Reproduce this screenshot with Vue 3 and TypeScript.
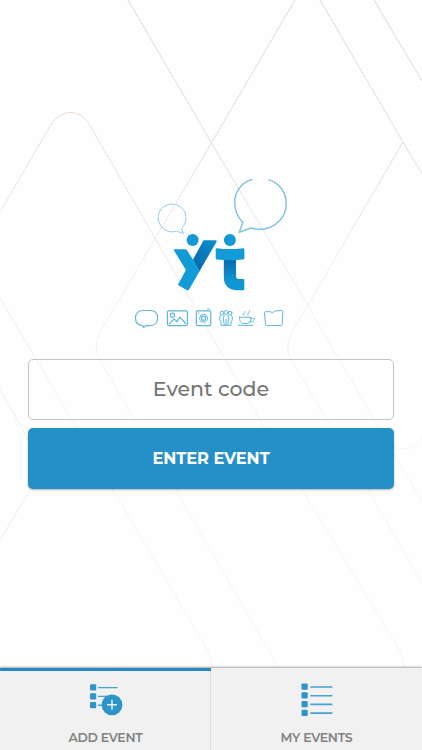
<script setup lang="ts">
import { ref } from 'vue'

type TabId = 'add' | 'mine'
const tabs: { id: TabId; label: string }[] = [
  { id: 'add', label: 'ADD EVENT' },
  { id: 'mine', label: 'MY EVENTS' },
]
const active = ref<TabId>('add')
const code = ref('')
</script>

<template>
  <div class="screen">
    <svg class="backdrop" viewBox="0 0 422 750" aria-hidden="true">
      <defs>
        <linearGradient id="fade" gradientUnits="userSpaceOnUse" x1="0" y1="0" x2="0" y2="450">
          <stop offset="0" stop-color="#dbd9dc" />
          <stop offset=".35" stop-color="#e0dee1" />
          <stop offset=".6" stop-color="#f0eff1" />
          <stop offset="1" stop-color="#f5f4f5" />
        </linearGradient>
        <linearGradient id="warm" gradientUnits="userSpaceOnUse" x1="0" y1="110" x2="0" y2="450">
          <stop offset="0" stop-color="#eadcd4" />
          <stop offset=".5" stop-color="#f1ebe9" />
          <stop offset="1" stop-color="#f5f4f5" />
        </linearGradient>
      </defs>
      <g fill="none" stroke="url(#fade)">
        <path d="M128 0L211 142L308 306L422 502" />
        <path d="M295 0L212 142L99 334Q94 345 98 357L139 427L279 668" />
        <path d="M320 0L403 142L422 174M374 0L422 81" />
        <path d="M403 142L291 334Q285 346 290 358L330 425L422 583" />
        <path d="M387 444Q395 449 405 449Q416 448 422 438" />
      </g>
      <g fill="none" stroke="url(#warm)">
        <path d="M0 212L52 123Q60 112 71 112.500Q82 113 89 124L263 425L400 651Q405 659 404 668" />
        <path d="M0 298L76 427L208 651Q213 659 212 668" />
        <path stroke="#f3ece8" d="M0 390L26 435Q37 460 30 490L0 540" />
      </g>
    </svg>

    <main class="content">
      <svg class="logo" width="154" height="154" viewBox="134 176 154 154" role="img" aria-label="yt">
        <defs>
          <linearGradient id="arm" x1="1" y1="0" x2="0.300" y2="1">
            <stop offset="0" stop-color="#0d91ce" /><stop offset="1" stop-color="#0569ac" />
          </linearGradient>
          <linearGradient id="stem" x1="0" y1="0" x2="0" y2="1">
            <stop offset="0" stop-color="#0568ae" /><stop offset=".75" stop-color="#1097d1" />
          </linearGradient>
        </defs>
        <g fill="none" stroke="#83c4e1" stroke-linejoin="round">
          <path stroke-width="1" stroke="#91cde4" d="M181.500 228.500Q187.500 222.500 185.300 213C182 206 175 202.500 168 204.700C160.500 207 156.800 214 158.700 221C161 229.500 169 233.500 176.500 231.200C179.500 231.800 181 232.900 183.300 233.500Z" />
          <path stroke-width="1.500" d="M252.500 179.600C242 181.900 234.700 191 234.700 203C234.700 211.200 238 217.400 242.800 222.400L239.200 232.300L251 228C269 233 286.200 221.500 286.200 203.500C286.200 192 279 182.500 268.200 179.600" />
        </g>
        <circle cx="192.600" cy="240" r="6" fill="#1399d6" />
        <circle cx="229.900" cy="240" r="6" fill="#1399d6" />
        <path fill="url(#arm)" d="M203.600 240.200H215.300Q217.500 240.200 216.300 242.200L199 272L193 259.500Z" />
        <path fill="#119bd7" d="M174.600 249.200H185.300Q186.500 249.200 187 250.200L199.900 270.500L189.300 289.200Q188.300 290.900 186.700 290L178.800 285.600Q177.700 284.900 178.400 283.800L185.900 270L174 250.500Q173.500 249.200 174.600 249.200Z" />
        <path fill="url(#stem)" d="M223.800 258H236V275.500Q236 279.300 239.500 279.100H243.300Q244.300 279.100 244.300 280.300V289.200Q244.300 290.300 243 290.300H236Q223.800 289 223.800 277Z" />
        <path fill="#119bd7" d="M217 248.200Q230 250 243.200 248.200Q244.400 248.200 244.400 249.400V258.300Q244.400 259.400 243 259.400Q230 261 217 259.400Q215.700 259.400 215.700 258.200V249.300Q215.700 248.200 217 248.200Z" />

        <g fill="none" stroke="#5fb7dc" stroke-width="1.200" stroke-linecap="round" stroke-linejoin="round">
          <path d="M143 310.500H150.500C155 310.500 157.600 313.500 157.600 317.900C157.600 322.300 155 325.600 150.500 325.600H146L143.600 327.500L142.700 325.500C138 325.400 135.500 322.300 135.500 317.900C135.500 313.500 138.500 310.500 143 310.500Z" />
          <rect x="167.400" y="310.800" width="20" height="14.800" rx="1.500" />
          <circle cx="172.500" cy="315.300" r="2.100" />
          <path d="M169.500 323.800L174 319L177 321.800L180 317.200L185.600 323.500" />
          <rect x="196.300" y="310.800" width="14.500" height="14.800" rx="1.300" />
          <path d="M207.500 309H209.500M198.500 313H199" />
          <circle cx="203.600" cy="318.300" r="4" stroke-width="1" />
          <circle cx="203.600" cy="318.300" r="2.100" />
          <g stroke-width="1">
            <circle cx="222" cy="313.100" r="1.900" /><circle cx="226" cy="312.500" r="2" /><circle cx="230" cy="313.100" r="1.900" />
            <path d="M221 315Q218.900 316.500 219.700 320L221 322V325.300H224M231 315Q233.100 316.500 232.300 320L231 322V325.300H228M224 315.500Q222.500 318 223.700 321L224.300 325.500H227.700L228.300 321Q229.500 318 228 315.500M226 319V325" />
            <path d="M239.500 317.300H251C251 321.200 249 323.500 247 323.500H243C241 323.500 239.300 320.800 239.500 317.300ZM251 318.300Q254.800 317.300 254.300 320Q253.500 322.200 249.800 322M238.500 325.400H252.500M244 315.500Q242.300 314.500 244 313.300Q245.500 312.400 244.800 311.500M248 315.500Q246.800 314.300 248.600 313Q250.300 312 249.300 310.700" />
            <path d="M264.600 314.600V312.700Q264.600 311.700 265.700 311.700H270.500L272.400 312.800L275.500 310.900L281.500 310.500Q282.900 310.500 282.800 311.900L282.200 324.400Q282.100 325.600 280.800 325.600H266.800Q265.600 325.600 265.500 324.400L264.600 314.600Z" />
          </g>
        </g>
      </svg>

      <form class="entry" @submit.prevent>
        <input v-model="code" class="field" type="text" placeholder="Event code" aria-label="Event code" />
        <button class="submit" type="submit">ENTER EVENT</button>
      </form>
    </main>

    <nav class="tabs">
      <button v-for="tab in tabs" :key="tab.id" class="tab" :class="{ active: active === tab.id }" @click="active = tab.id">
        <svg width="34" height="34" viewBox="0 0 34 34" aria-hidden="true">
          <g v-if="tab.id === 'add'">
            <g fill="#2d94cc">
              <rect x="1" y="1.300" width="6.200" height="6.200" rx="1" />
              <rect x="1" y="10.200" width="6.200" height="6.200" rx="1" />
              <rect x="1" y="19" width="6.200" height="6.200" rx="1" />
            </g>
            <path d="M9.500 4.600H28M9.500 13.400H19.500M9.500 22.200H15.500" fill="none" stroke="#459fd0" stroke-width="1.400" stroke-linecap="round" />
            <circle cx="23" cy="21.800" r="10.400" fill="#2d94cc" />
            <path d="M18 21.800H28M23 16.800V26.800" stroke="#e4f2fa" stroke-width="1.500" />
          </g>
          <g v-else v-for="n in 4" :key="n" :transform="`translate(0 ${(n - 1) * 8.7})`">
            <rect x="1.500" y=".6" width="6.200" height="6.200" rx="1" fill="#2d94cc" />
            <path d="M11 4H31.700" stroke="#459fd0" stroke-width="1.600" stroke-linecap="round" />
          </g>
        </svg>
        <span>{{ tab.label }}</span>
      </button>
    </nav>
  </div>
</template>

<style>
body { margin: 0; background: #fefefe; }
</style>

<style scoped>
.screen {
  position: relative;
  box-sizing: border-box;
  display: flex;
  flex-direction: column;
  width: 100%;
  height: 750px;
  overflow: hidden;
  background: #fefefe;
  font-family: Montserrat, Inter, "Open Sans", sans-serif;
}
.backdrop { position: absolute; inset: 0; width: 422px; height: 750px; }
.content {
  position: relative;
  flex: 1;
  display: flex;
  flex-direction: column;
  align-items: center;
  padding: 176px 28px 0;
}
.logo { display: block; }
.entry { display: flex; flex-direction: column; gap: 8px; width: 100%; margin-top: 29px; }
.field, .submit {
  box-sizing: border-box;
  width: 100%;
  height: 61px;
  margin: 0;
  border-radius: 5px;
  font-family: inherit;
  text-align: center;
}
.field {
  border: 1px solid #c5c5c5;
  background: transparent;
  padding: 0 10px 2px;
  color: #555;
  font-size: 20.500px;
  font-weight: 500;
  letter-spacing: 0;
  outline: none;
}
.field::placeholder { color: #757575; opacity: 1; }
.submit {
  border: 0;
  padding: 0 6px 1px;
  background: #2590c8;
  box-shadow: 0 1px 2px rgba(0, 0, 0, .3);
  color: #fff;
  font-size: 16.200px;
  font-weight: 700;
  letter-spacing: -.05px;
}
.tabs {
  position: relative;
  display: flex;
  height: 82px;
  background: #f1f1f1;
  box-shadow: 0 -1px 2px rgba(0, 0, 0, .35);
}
.tab {
  box-sizing: border-box;
  flex: 1;
  display: flex;
  flex-direction: column;
  align-items: center;
  gap: 12px;
  margin: 0;
  padding: 12px 0 0;
  border: 0;
  border-top: 3px solid transparent;
  background: none;
  color: #818181;
  font-family: inherit;
  font-size: 12.500px;
  font-weight: 600;
  letter-spacing: -.3px;
  line-height: 18px;
}
.tab.active { border-top-color: #2789bf; box-shadow: inset -1px 0 #dedede; }
</style>
